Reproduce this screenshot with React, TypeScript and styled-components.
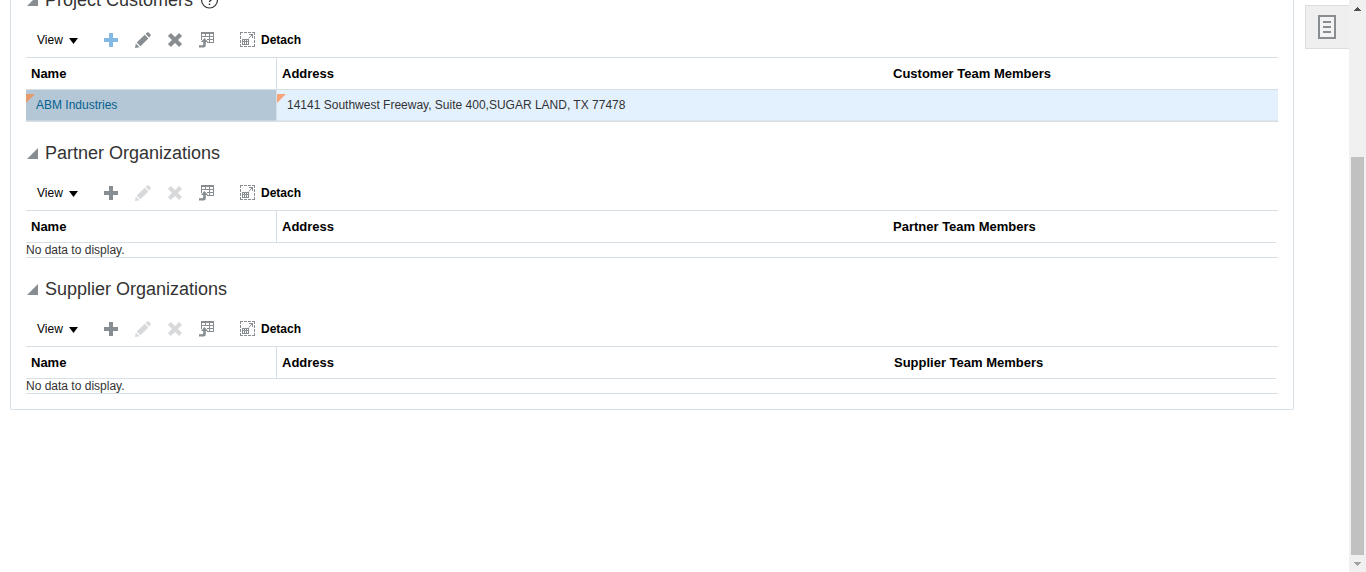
import React from 'react';
import styled, { createGlobalStyle } from 'styled-components';

const Global = createGlobalStyle`
  * { box-sizing: border-box; }
  html, body { margin: 0; height: 100%; overflow: hidden; background: #fff; }
  body { font-family: "Liberation Sans", Arial, sans-serif; font-size: 12px; color: #333; }
  svg { display: block; flex: none; }
`;

const Page = styled.div`
  display: flex;
  width: 1366px;
  height: 572px;
  overflow: hidden;
`;

const Panel = styled.main`
  width: 1284px;
  height: 410px;
  margin-left: 10px;
  padding: 0 15px 15px;
  border: 1px solid #d6dfe6;
  border-top: 0;
  border-radius: 0 0 2px 2px;
  overflow: hidden;
  display: flex;
  flex-direction: column;
  justify-content: flex-end;
`;

const Section = styled.section`
  flex: none;
`;

const Heading = styled.h2`
  display: flex;
  align-items: center;
  height: 28px;
  margin: 0;
  padding: 0 0 0 1px;
  font-size: 18px;
  font-weight: 400;
  color: #333;
  white-space: nowrap;
`;

const SectionTop = styled.div`
  padding-top: 17px;
  height: 88px;
`;

const Title = styled.span<{ $width: number }>`
  width: ${(p) => p.$width}px;
  margin-left: 7px;
`;

const Toolbar = styled.div`
  display: flex;
  align-items: center;
  height: 26px;
  margin-top: 13px;
  padding-left: 11px;
`;

const MenuButton = styled.button`
  display: flex;
  align-items: center;
  width: 66px;
  padding: 0;
  border: 0;
  background: none;
  font: 12px "Liberation Sans", Arial, sans-serif;
  color: #000;
  svg { margin: 2px 0 0 6px; }
`;

const Tools = styled.div`
  display: flex;
  gap: 16px;
`;

const DetachButton = styled.button`
  display: flex;
  align-items: center;
  gap: 5px;
  margin-left: 25px;
  padding: 0;
  border: 0;
  background: none;
  font: bold 12px "Liberation Sans", Arial, sans-serif;
  color: #000;
`;

const Table = styled.div`
  border-top: 1px solid #d6dfe6;
`;

const HeaderRow = styled.div<{ $short?: boolean }>`
  display: grid;
  grid-template-columns: 251px 611px 1fr;
  height: 32px;
  margin-right: ${(p) => (p.$short ? 2 : 0)}px;
  border-bottom: 1px solid #d6dfe6;
`;

const HeaderCell = styled.div<{ $divider?: boolean; $inset?: number }>`
  padding-left: ${(p) => p.$inset ?? 5}px;
  border-right: ${(p) => (p.$divider ? '1px solid #d6dfe6' : '0')};
  font-size: 13px;
  font-weight: 700;
  line-height: 31px;
  color: #000;
`;

const DataRow = styled.div`
  display: grid;
  grid-template-columns: 251px 1fr;
  height: 32px;
  border-bottom: 1px solid #d6dfe6;
  background: #e3f1ff;
`;

const Cell = styled.div<{ $selected?: boolean }>`
  display: flex;
  align-items: flex-start;
  background: ${(p) => (p.$selected ? '#b4c7d6' : '#e3f1ff')};
  border-right: ${(p) => (p.$selected ? '1px solid #d6dfe6' : '0')};
  border-bottom: 1px solid ${(p) => (p.$selected ? '#c8d5df' : '#dfe6eb')};
  color: ${(p) => (p.$selected ? '#046190' : '#333')};
  line-height: 30px;
  svg { margin-top: 4px; }
`;

const CellText = styled.span`
  margin-left: 1px;
`;

const Empty = styled.div`
  height: 15px;
  border-bottom: 1px solid #d6dfe6;
  line-height: 14px;
`;

const SideTab = styled.aside`
  display: flex;
  align-items: center;
  width: 44px;
  height: 44px;
  margin: 5px 0 0 11px;
  padding-left: 12px;
  border: 1px solid #d9dee2;
  border-right: 0;
  background: #efefef;
`;

const ScrollTrack = styled.div`
  display: flex;
  flex-direction: column;
  width: 17px;
  height: 572px;
  background: #f0f0f0;
`;

const ScrollArrow = styled.div`
  display: flex;
  align-items: center;
  justify-content: center;
  width: 17px;
  height: 17px;
`;

const ScrollThumb = styled.div`
  width: 13px;
  height: 398px;
  margin: 140px 0 0 2px;
  background: #c1c1c1;
`;

const GREY = '#878d91';
const PALE = '#d7d9da';

const Disclosure = () => (
  <svg width="11" height="11" viewBox="0 0 11 11"><path d="M11 0v11H0z" fill={GREY} /></svg>
);

const Help = () => (
  <svg width="19" height="18" viewBox="0 0 19 18" fill="none" stroke="#333" strokeWidth="1.2">
    <circle cx="9.5" cy="9" r="8" />
    <path d="M6.9 7a2.6 2.6 0 1 1 4.2 2c-1 .7-1.6 1.1-1.6 2.1M9.5 12.4v1.6" strokeWidth="1.4" />
  </svg>
);

const Caret = () => (
  <svg width="9" height="6" viewBox="0 0 9 6"><path d="M0 0h9L4.5 6z" fill="#000" /></svg>
);

const Plus = ({ color }: { color: string }) => (
  <svg width="16" height="16" viewBox="0 0 16 16"><path d="M6 1h4v5h5v4h-5v5H6v-5H1V6h5z" fill={color} /></svg>
);

const Pencil = ({ color }: { color: string }) => (
  <svg width="16" height="16" viewBox="0 0 16 16" fill={color}>
    <path d="M0 16l.8-4.6 3.8 3.8zM1.7 10.5l8-7.8 3.7 3.7-8 7.9zM10.6 1.9L12.2.4q.7-.6 1.4 0l2 2q.6.7 0 1.4l-1.4 1.6z" />
  </svg>
);

const Cross = ({ color }: { color: string }) => (
  <svg width="16" height="16" viewBox="0 0 16 16">
    <path d="M2.4 2.4l11.2 11.2M13.6 2.4L2.4 13.6" stroke={color} strokeWidth="4.2" />
  </svg>
);

const Freeze = () => (
  <svg width="16" height="16" viewBox="0 0 16 16" fill={GREY} shapeRendering="crispEdges">
    <path d="M2 0h13v2H2zM2 2h1v6H2zM6 2h1v3H6zM10 2h1v8h-1zM14 2h1v8h-1zM2 4h13v1H2zM8 7h7v1H8zM8 10h7v1H8z" />
    <path d="M5.5 6L9 10H6.8v3.2q0 2.3-2.3 2.3H0v-2.3h3.2q1 0 1-1V10H2z" shapeRendering="auto" />
  </svg>
);

const DetachIcon = () => (
  <svg width="16" height="16" viewBox="0 0 16 16" fill="none" stroke={GREY} shapeRendering="crispEdges">
    <path d="M0 .5h3M4 .5h3M8 .5h3M12 .5h3M0 14.5h3M4 14.5h3M8 14.5h3M12 14.5h3M.5 0v3M.5 4v3M.5 8v3M.5 12v3M14.5 0v3M14.5 4v3M14.5 8v3M14.5 12v3" />
    <path d="M2 7.5h7M2 9.5h7M2 12.5h7M2.5 7v6M4.5 8v5M6.5 8v5M8.5 7v6" />
    <path d="M9 2.5h4M12.5 2v4" />
    <path d="M8.6 6.4l3.6-3.6" shapeRendering="auto" />
  </svg>
);

const Flag = ({ color }: { color: string }) => (
  <svg width="9" height="9" viewBox="0 0 9 9"><path d="M0 0h9L0 9z" fill={color} /></svg>
);

const Notes = () => (
  <svg width="18" height="24" viewBox="0 0 18 24" fill="none" stroke={GREY} strokeWidth="2" shapeRendering="crispEdges">
    <path d="M1 1h16v22H1z" fill="#f3f3f3" />
    <path d="M5 7h8M5 12h8M5 17h8" />
  </svg>
);

interface PartyProps {
  title: string;
  titleWidth: number;
  members: string;
  inset?: number;
  help?: boolean;
  row?: { name: string; address: string };
}

const Party = ({ title, titleWidth, members, inset = 5, help, row }: PartyProps) => (
  <Section>
    <SectionTop>
      <Heading>
        <Disclosure />
        <Title $width={titleWidth}>{title}</Title>
        {help && <Help />}
      </Heading>
      <Toolbar>
        <MenuButton>View<Caret /></MenuButton>
        <Tools>
          <Plus color={row ? '#83b9e3' : GREY} />
          <Pencil color={row ? GREY : PALE} />
          <Cross color={row ? GREY : PALE} />
          <Freeze />
        </Tools>
        <DetachButton><DetachIcon />Detach</DetachButton>
      </Toolbar>
    </SectionTop>
    <Table>
      <HeaderRow $short={!row}>
        <HeaderCell $divider>Name</HeaderCell>
        <HeaderCell>Address</HeaderCell>
        <HeaderCell $inset={inset}>{members}</HeaderCell>
      </HeaderRow>
      {row ? (
        <DataRow>
          <Cell $selected><Flag color="#e59a6c" /><CellText>{row.name}</CellText></Cell>
          <Cell><Flag color="#f7a578" /><CellText>{row.address}</CellText></Cell>
        </DataRow>
      ) : (
        <Empty>No data to display.</Empty>
      )}
    </Table>
  </Section>
);

export default function App() {
  return (
    <>
      <Global />
      <Page>
        <Panel>
          <Party
            title="Project Customers"
            titleWidth={155}
            members="Customer Team Members"
            help
            row={{ name: 'ABM Industries', address: '14141 Southwest Freeway, Suite 400,SUGAR LAND, TX 77478' }}
          />
          <Party title="Partner Organizations" titleWidth={180} members="Partner Team Members" />
          <Party title="Supplier Organizations" titleWidth={190} members="Supplier Team Members" inset={6} />
        </Panel>
        <SideTab><Notes /></SideTab>
        <ScrollTrack>
          <ScrollArrow>
            <svg width="7" height="4" viewBox="0 0 7 4" shapeRendering="crispEdges"><path d="M3 0h1v1h1v1h1v1h1v1H0V3h1V2h1V1h1z" fill="#505050" /></svg>
          </ScrollArrow>
          <ScrollThumb />
          <ScrollArrow>
            <svg width="7" height="4" viewBox="0 0 7 4" shapeRendering="crispEdges"><path d="M0 0h7v1H6v1H5v1H4v1H3V3H2V2H1V1H0z" fill="#a3a3a3" /></svg>
          </ScrollArrow>
        </ScrollTrack>
      </Page>
    </>
  );
}
